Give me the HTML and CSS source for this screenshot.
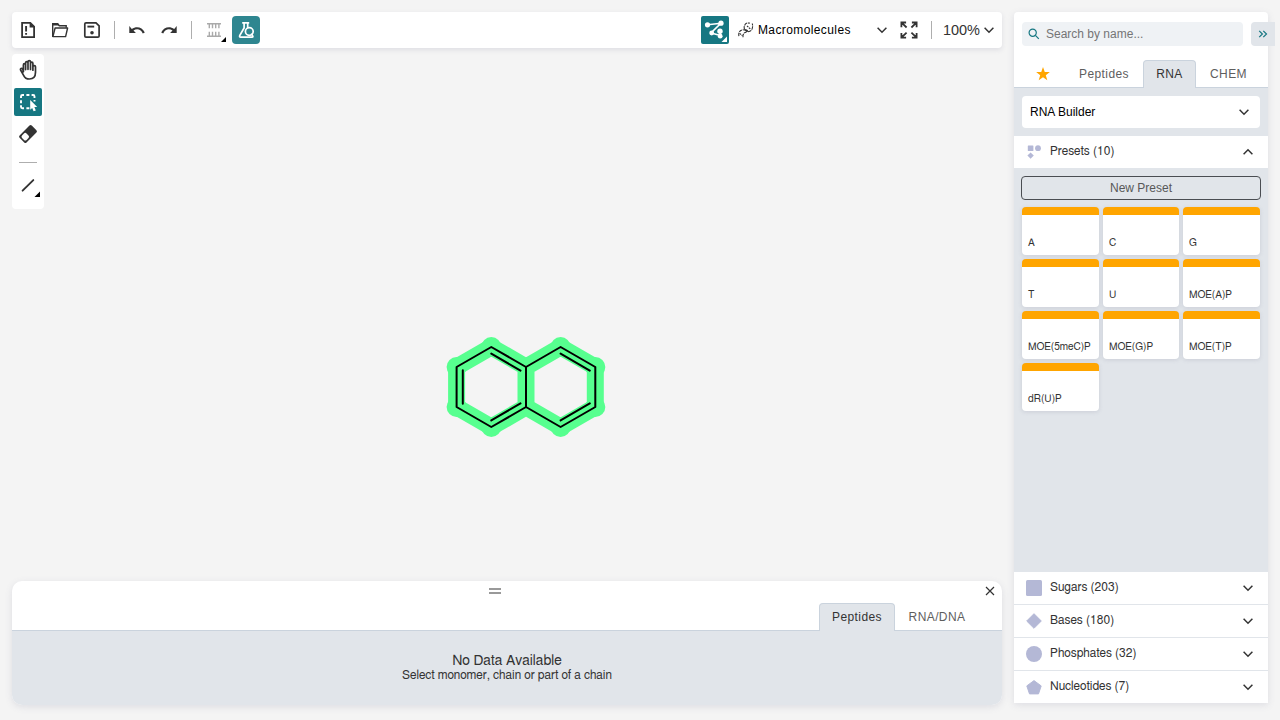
FILE: index.html
```html
<!DOCTYPE html>
<html lang="en">
<head>
<meta charset="utf-8">
<title>Macromolecules editor</title>
<link rel="stylesheet" href="styles.css">
</head>
<body>
<div class="app">
  <main class="main">
    <header class="topbar">
      <div class="group">
        <button class="tool"><svg viewBox="0 0 28 28"><path d="M8.1 6.9h8.2l3.8 3.8v10.4h-12z" fill="none" stroke="#333" stroke-width="1.8"/><path d="M15.6 6.5v5h5z" fill="#333"/><path d="M12.1 10v5.6M12.1 17v1.8" stroke="#333" stroke-width="1.9"/></svg></button>
        <button class="tool"><svg viewBox="0 0 28 28"><path d="M6.7 21V7.8h5l1.6 2h6.9v2" fill="none" stroke="#333" stroke-width="1.4"/><path d="M6.2 7.2h5.6l1.6 2.3h-7.2z" fill="#333"/><path d="M6.9 20.6l2.2-8.6h12.5l-2 8.6z" fill="#fff" stroke="#333" stroke-width="1.4" stroke-linejoin="round"/></svg></button>
        <button class="tool"><svg viewBox="0 0 28 28"><path d="M8 6.9h10l3.1 3V20q0 1.2-1.2 1.2H8q-1.2 0-1.2-1.2V8.1Q6.8 6.9 8 6.9z" fill="none" stroke="#333" stroke-width="1.7"/><path d="M9.4 10.6h6.8" stroke="#333" stroke-width="1.9"/><circle cx="14" cy="16.7" r="1.8" fill="#333"/></svg></button>
        <span class="divider"></span>
        <button class="tool"><svg viewBox="0 0 28 28"><path d="M6.3 10v7h6.6l-2.4-2.4c3.5-2.5 7.2-1.3 9.3 2.8l2-1c-2.5-5.2-8.2-6.8-13-3.5z" fill="#333"/></svg></button>
        <button class="tool"><svg viewBox="0 0 28 28"><path d="M21.7 10v7h-6.6l2.4-2.4c-3.5-2.5-7.2-1.3-9.3 2.8l-2-1c2.5-5.2 8.2-6.8 13-3.5z" fill="#333"/></svg></button>
        <span class="divider"></span>
        <button class="tool"><svg viewBox="0 0 28 28"><path d="M7 7.7h14M7 20.2h14M9.3 8v4.3M12.5 8v4.3M15.7 8v4.3M18.9 8v4.3M9.3 20v-4.3M12.5 20v-4.3M15.7 20v-4.3M18.9 20v-4.3" stroke="#aaa" stroke-width="1.4"/><path d="M26 21v5h-5z" fill="#000"/></svg></button>
        <button class="tool flask"><svg viewBox="0 0 28 28"><path d="M10.2 6.9h7M12.1 7v5L7.7 19.7q-.5 1.5.9 1.5h11.4q1.4-.1.7-1.3l-1.5-2.3M15.7 7v5" fill="none" stroke="#fff" stroke-width="1.7"/><circle cx="17.3" cy="15.5" r="3.9" fill="none" stroke="#fff" stroke-width="1.7"/></svg></button>
      </div>
      <div class="group">
        <button class="tool active"><svg viewBox="0 0 28 28"><path d="M6.7 8.7l13.2-1.4L10 16.9l9.6 2.7-1-5" fill="none" stroke="#fff" stroke-width="1.6"/><g fill="#fff"><circle cx="6.5" cy="8.8" r="2.6"/><circle cx="20" cy="7.2" r="2.6"/><circle cx="10.7" cy="17" r="2.4"/><circle cx="19" cy="15.2" r="2.7"/><circle cx="19.2" cy="20.2" r="2.4"/><path d="M26 20.5v5.5h-5.5z"/></g></svg></button>
        <div class="mode">
          <svg class="dna" viewBox="0 0 16 16"><g fill="none" stroke="#333" stroke-width="1.1"><path d="M.9 14.2C.2 10.5 2 8 5 7.8M6.6 7.6C5.4 4.2 7 1.6 9.5 .9l2.3.2" stroke-dasharray="3.4 .8"/><path d="M5 15.3C4.6 12 6 10.4 8.4 10.2M10 9.8c3.8-.2 5.3-3.4 4.3-8.3" stroke-dasharray="3.6 .8"/><path d="M5 7.8c2.4.4 3.8 1.1 3.4 2.4M6.6 7.6c1.6 0 3 .6 3.4 2.2"/><path d="M1.6 11.4l2.8 2.2M9 4l3.6 3.2" stroke-dasharray="1.8 .8"/></g></svg>
          <span class="mode-name">Macromolecules</span>
          <svg class="chev" viewBox="0 0 12 8"><path d="M1.6 1.8L6 6.2l4.4-4.4" /></svg>
        </div>
        <button class="tool expand"><svg viewBox="0 0 28 28"><g fill="none" stroke="#333" stroke-width="1.8"><path d="M6.4 11.2V6.5h4.7M6.6 6.7l5 4.8M16.9 6.5h4.7v4.7M21.4 6.7l-5 4.8M6.4 16.9v4.7h4.7M6.6 21.4l5-4.8M16.9 21.6h4.7v-4.7M21.4 21.4l-5-4.8"/></g></svg></button>
        <span class="divider"></span>
        <div class="zoom"><span>100%</span><svg class="chev" viewBox="0 0 12 8"><path d="M1.6 1.8L6 6.2l4.4-4.4" /></svg></div>
      </div>
    </header>
    <div class="workspace">
      <nav class="sidebar">
        <button class="tool"><svg viewBox="0 0 28 28"><path d="M9.2 16V9.1c0-1.8 2.2-1.8 2.2 0v4.7V7.2c0-1.8 2.4-1.8 2.4 0v6.3V6c0-1.7 2.5-1.7 2.5 0v7.7V7.6c0-1.7 2.4-1.7 2.4 0v6.8V11c0-1.6 2.6-1.6 2.6 0v5.5c0 4-2.2 6.7-6.1 6.7-3 0-4.7-1.3-5.8-3.7l-3-5.3c-.7-1.3 1.2-2.2 2.1-1z" transform="translate(.2 -.2)" fill="none" stroke="#333" stroke-width="1.7" stroke-linejoin="round"/></svg></button>
        <button class="tool active"><svg viewBox="0 0 28 28"><path d="M7 10V8.5Q7 7 8.5 7H10M12.4 7h3M17.6 7h1.5q1.4 0 1.4 1.5V10M7 12.2v3M7 17.3v1.4q0 1.5 1.5 1.5H10M12.4 20.2h3M20.5 12v1.4" fill="none" stroke="#fff" stroke-width="1.9"/><path d="M16.2 12v9.8l2-1.7 1.4 3.2 2.2-.9-1.4-3.3h2.8z" fill="#fff"/></svg></button>
        <button class="tool"><svg viewBox="0 0 28 28"><g transform="translate(14 14) rotate(-45)"><rect x="-8.6" y="-4.9" width="17.2" height="9.8" rx="1.6" fill="#333"/><rect x="-7" y="-3.2" width="6.3" height="6.4" rx="1.8" fill="#fff"/></g></svg></button>
        <span class="hline"></span>
        <button class="tool bond"><svg viewBox="0 0 28 28"><path d="M8.6 18.7L19.3 8.1" stroke="#333" stroke-width="1.9" stroke-linecap="round"/><path d="M26 19.5V25h-5.5z" fill="#000"/></svg></button>
      </nav>
      <svg class="canvas" viewBox="44 54 958 527">
        <g fill="#57ff8f" stroke="#57ff8f">
          <path d="M491.3 347L456.6 367V407L491.3 427L526 407V367zM526 367L560.6 347L595.3 367V407L560.6 427L526 407" fill="none" stroke-width="17" stroke-linejoin="round"/>
          <g stroke="none"><circle cx="491.3" cy="347" r="10"/><circle cx="456.6" cy="367" r="10"/><circle cx="456.6" cy="407" r="10"/><circle cx="491.3" cy="427" r="10"/><circle cx="560.6" cy="347" r="10"/><circle cx="595.3" cy="367" r="10"/><circle cx="595.3" cy="407" r="10"/><circle cx="560.6" cy="427" r="10"/></g>
        </g>
        <path d="M491.3 347L456.6 367V407L491.3 427L526 407V367zM526 367L560.6 347L595.3 367V407L560.6 427L526 407M462.8 370.3v33.4M491.3 353.6l29.2 17M491.3 420.4l29.2-17M560.6 353.6l29.2 17M560.6 420.4l29.2-17" fill="none" stroke="#000" stroke-width="2" stroke-linejoin="round" stroke-linecap="round"/>
      </svg>
    </div>
    <section class="bottom">
      <div class="bottom-head">
        <span class="grip"></span>
        <svg class="close" viewBox="0 0 10 10"><path d="M1 1l8 8M9 1l-8 8"/></svg>
      </div>
      <div class="tabs bottom-tabs"><span class="tab on">Peptides</span><span class="tab">RNA/DNA</span></div>
      <div class="empty"><div class="empty-title">No Data Available</div><div class="empty-text">Select monomer, chain or part of a chain</div></div>
    </section>
  </main>
  <aside class="library">
    <button class="collapse"><svg viewBox="0 0 10 8"><path d="M1.2.8L4.4 4 1.2 7.2M5.3.8L8.5 4 5.3 7.2"/></svg></button>
    <div class="search"><svg viewBox="0 0 12 12"><circle cx="4.7" cy="4.7" r="3.6"/><path d="M7.4 7.4l3.4 3.4"/></svg><span>Search by name...</span></div>
    <div class="tabs lib-tabs"><span class="tab star"><svg viewBox="0 0 14 14"><path d="M7 0l1.75 4.9 5.1.15-4.05 3.2 1.5 5L7 10.35 2.7 13.25l1.5-5L.15 5.05l5.1-.15z" fill="#ffa500"/></svg></span><span class="tab pep">Peptides</span><span class="tab on">RNA</span><span class="tab chem">CHEM</span></div>
    <div class="builder-wrap"><div class="builder"><span>RNA Builder</span><svg class="chev" viewBox="0 0 12 8"><path d="M1.6 1.8L6 6.2l4.4-4.4" /></svg></div></div>
    <div class="row presets"><svg class="ico" viewBox="0 0 16 16"><g fill="#b4b8d6"><rect x="1.8" y="1.4" width="5.6" height="5.6" rx=".5"/><circle cx="12" cy="4.2" r="2.9"/><path d="M4.6 8.4l3.2 3.2-3.2 3.2-3.2-3.2z"/></g></svg><span>Presets (10)</span><svg class="chev" viewBox="0 0 12 8"><path d="M1.6 6.2L6 1.8l4.4 4.4" /></svg></div>
    <div class="preset-body">
      <button class="new">New Preset</button>
      <div class="cards"><div class="card">A</div><div class="card">C</div><div class="card">G</div><div class="card">T</div><div class="card">U</div><div class="card">MOE(A)P</div><div class="card">MOE(5meC)P</div><div class="card">MOE(G)P</div><div class="card">MOE(T)P</div><div class="card">dR(U)P</div></div>
    </div>
    <div class="row"><svg class="ico" viewBox="0 0 16 16"><rect width="16" height="16" rx="1.5" fill="#b4b8d6"/></svg><span>Sugars (203)</span><svg class="chev" viewBox="0 0 12 8"><path d="M1.6 1.8L6 6.2l4.4-4.4" /></svg></div>
    <div class="row"><svg class="ico" viewBox="0 0 16 16"><path d="M8 .7L15.3 8 8 15.3.7 8z" fill="#b4b8d6" stroke="#b4b8d6" stroke-linejoin="round"/></svg><span>Bases (180)</span><svg class="chev" viewBox="0 0 12 8"><path d="M1.6 1.8L6 6.2l4.4-4.4" /></svg></div>
    <div class="row"><svg class="ico" viewBox="0 0 16 16"><circle cx="8" cy="8" r="8" fill="#b4b8d6"/></svg><span>Phosphates (32)</span><svg class="chev" viewBox="0 0 12 8"><path d="M1.6 1.8L6 6.2l4.4-4.4" /></svg></div>
    <div class="row last"><svg class="ico" viewBox="0 0 16 16"><path d="M8 1.6l7.2 5.3-2.7 8h-9l-2.7-8z" fill="#b4b8d6" stroke="#b4b8d6" stroke-linejoin="round"/></svg><span>Nucleotides (7)</span><svg class="chev" viewBox="0 0 12 8"><path d="M1.6 1.8L6 6.2l4.4-4.4" /></svg></div>
  </aside>
</div>
</body>
</html>
```
FILE: styles.css
```css
* { box-sizing: border-box; }
body { margin: 0; background: #f4f4f4; color: #333; font-family: FreeSans, "Nimbus Sans", "Liberation Sans", Arial, sans-serif; overflow: hidden; }
button { border: 0; padding: 0; margin: 0; background: none; font: inherit; color: inherit; }
svg { display: block; flex: none; }
.app { width: 1280px; height: 720px; padding: 12px 12px 0; display: flex; gap: 12px; }
.main { width: 990px; display: flex; flex-direction: column; }
.topbar { height: 36px; background: #fff; border-radius: 4px; box-shadow: 0 2px 5px rgba(103,104,132,.15); display: flex; justify-content: space-between; margin-bottom: 6px; padding: 0 2px; }
.group { display: flex; align-items: center; }
.tool { width: 28px; height: 28px; border-radius: 3px; margin: 0 2px; }
.tool svg { width: 28px; height: 28px; }
.active { background: #167782; border-radius: 2px; }
.flask { background: #2e8690; border-radius: 4px; }
.divider { width: 1px; height: 18px; background: #aeaeae; margin: 0 6px; }
.group:first-child .tool { margin-left: 0; margin-right: 4px; }
.group:first-child .divider { margin: 0 8px 0 4px; }
.mode { display: flex; align-items: center; width: 150px; margin-left: 7px; font: 12px "Liberation Sans", Arial, sans-serif; color: #000; letter-spacing: .4px; }
.dna { width: 16px; height: 16px; margin-right: 4px; }
.chev { width: 12px; height: 8px; margin-left: auto; fill: none; stroke: #333; stroke-width: 1.5; }
.expand { margin: 0 8px 0 7px; }
.group .divider { margin-left: 0; margin-right: 11px; }
.zoom { display: flex; align-items: center; gap: 3px; font: 14.5px "Liberation Sans", Arial, sans-serif; padding-right: 5px; }
.workspace { height: 527px; display: flex; }
.sidebar { width: 32px; height: 155px; background: #fff; border-radius: 4px; padding-top: 2px; display: flex; flex-direction: column; align-items: center; gap: 4px; flex: none; }
.hline { width: 18px; height: 1px; background: #aeaeae; margin: 10px 0 5px; }
.canvas { width: 958px; height: 527px; }
.bottom { height: 124px; background: #fff; border-radius: 10px; box-shadow: 0 2px 7px rgba(103,104,132,.15); display: flex; flex-direction: column; overflow: hidden; }
.bottom-head { height: 22px; display: flex; align-items: flex-start; padding: 0 7px 0 477px; justify-content: space-between; }
.grip { width: 12px; height: 6px; margin-top: 7px; border: solid #999; border-width: 2px 0; }
.close { width: 10px; height: 10px; margin-top: 5px; fill: none; stroke: #333; stroke-width: 1.2; }
.tabs { display: flex; height: 28px; border-bottom: 1px solid #cad3dd; font: 12px/26px "Liberation Sans", Arial, sans-serif; letter-spacing: .4px; color: #5e5e5e; }
.tab { height: 28px; border: 1px solid transparent; border-bottom: 0; text-align: center; }
.tab.on { background: #e1e5ea; border-color: #cad3dd; border-radius: 4px 4px 0 0; color: #333; }
.bottom-tabs { padding-left: 807px; }
.bottom-tabs .tab { width: 76px; }
.bottom-tabs .tab:last-child { width: 84px; }
.empty { flex: 1; background: #e1e5ea; text-align: center; padding-top: 22px; }
.empty-title { font-size: 14px; line-height: 16px; letter-spacing: .1px; }
.empty-text { font-size: 12px; line-height: 14px; letter-spacing: .05px; margin-top: -1px; }
.library { width: 254px; height: 691px; background: #fff; border-radius: 4px 4px 0 0; box-shadow: 0 2px 7px rgba(103,104,132,.15); position: relative; display: flex; flex-direction: column; }
.collapse { position: absolute; left: 237px; top: 10px; width: 24px; height: 24px; border-radius: 4px 0 0 4px; background: #e1e5ea; display: flex; align-items: center; justify-content: center; }
.collapse svg { width: 10px; height: 8px; fill: none; stroke: #167782; stroke-width: 1.2; }
.search { margin: 10px 0 14px 8px; width: 221px; height: 24px; border-radius: 4px; background: #eff2f5; display: flex; align-items: center; gap: 6px; padding-left: 6px; font: 12px "Liberation Sans", Arial, sans-serif; color: #757575; }
.search svg { width: 12px; height: 12px; fill: none; stroke: #167782; stroke-width: 1.2; }
.lib-tabs .star { width: 51px; display: flex; align-items: center; justify-content: center; padding-left: 7px; }
.star svg { width: 14px; height: 14px; margin-top: -2px; }
.lib-tabs .pep { width: 78px; }
.lib-tabs .on { width: 53px; }
.lib-tabs .chem { width: 65px; }
.builder-wrap { background: #e1e5ea; padding: 8px; height: 48px; flex: none; }
.builder { height: 32px; background: #fff; border-radius: 4px; display: flex; align-items: center; padding: 0 10px 0 8px; font: 12px "Liberation Sans", Arial, sans-serif; color: #000; }
.row { height: 33px; flex: none; border-bottom: 1px solid #e1e5ea; display: flex; align-items: center; padding: 0 14px 0 12px; font-size: 12px; letter-spacing: .07px; }
.row.last { height: 32px; border-bottom: 0; }
.ico { width: 16px; height: 16px; margin-right: 8px; }
.row span { margin-top: -1px; }
.preset-body { flex: 1; background: #e1e5ea; padding: 7px 8px; }
.new { display: block; width: 240px; height: 24px; margin: 0 -1px 7px; border: 1px solid #4a4d52; border-radius: 4px; color: #585858; font: 12px "Liberation Sans", Arial, sans-serif; }
.cards { display: grid; grid-template-columns: 77px 76px 77px; gap: 4px; }
.card { height: 48px; background: #fff; border-top: 8px solid #ffa500; border-radius: 4px; box-shadow: 0 1px 4px rgba(103,104,132,.18); padding: 22px 0 0 6px; font-size: 10.2px; line-height: 12px; }
```
